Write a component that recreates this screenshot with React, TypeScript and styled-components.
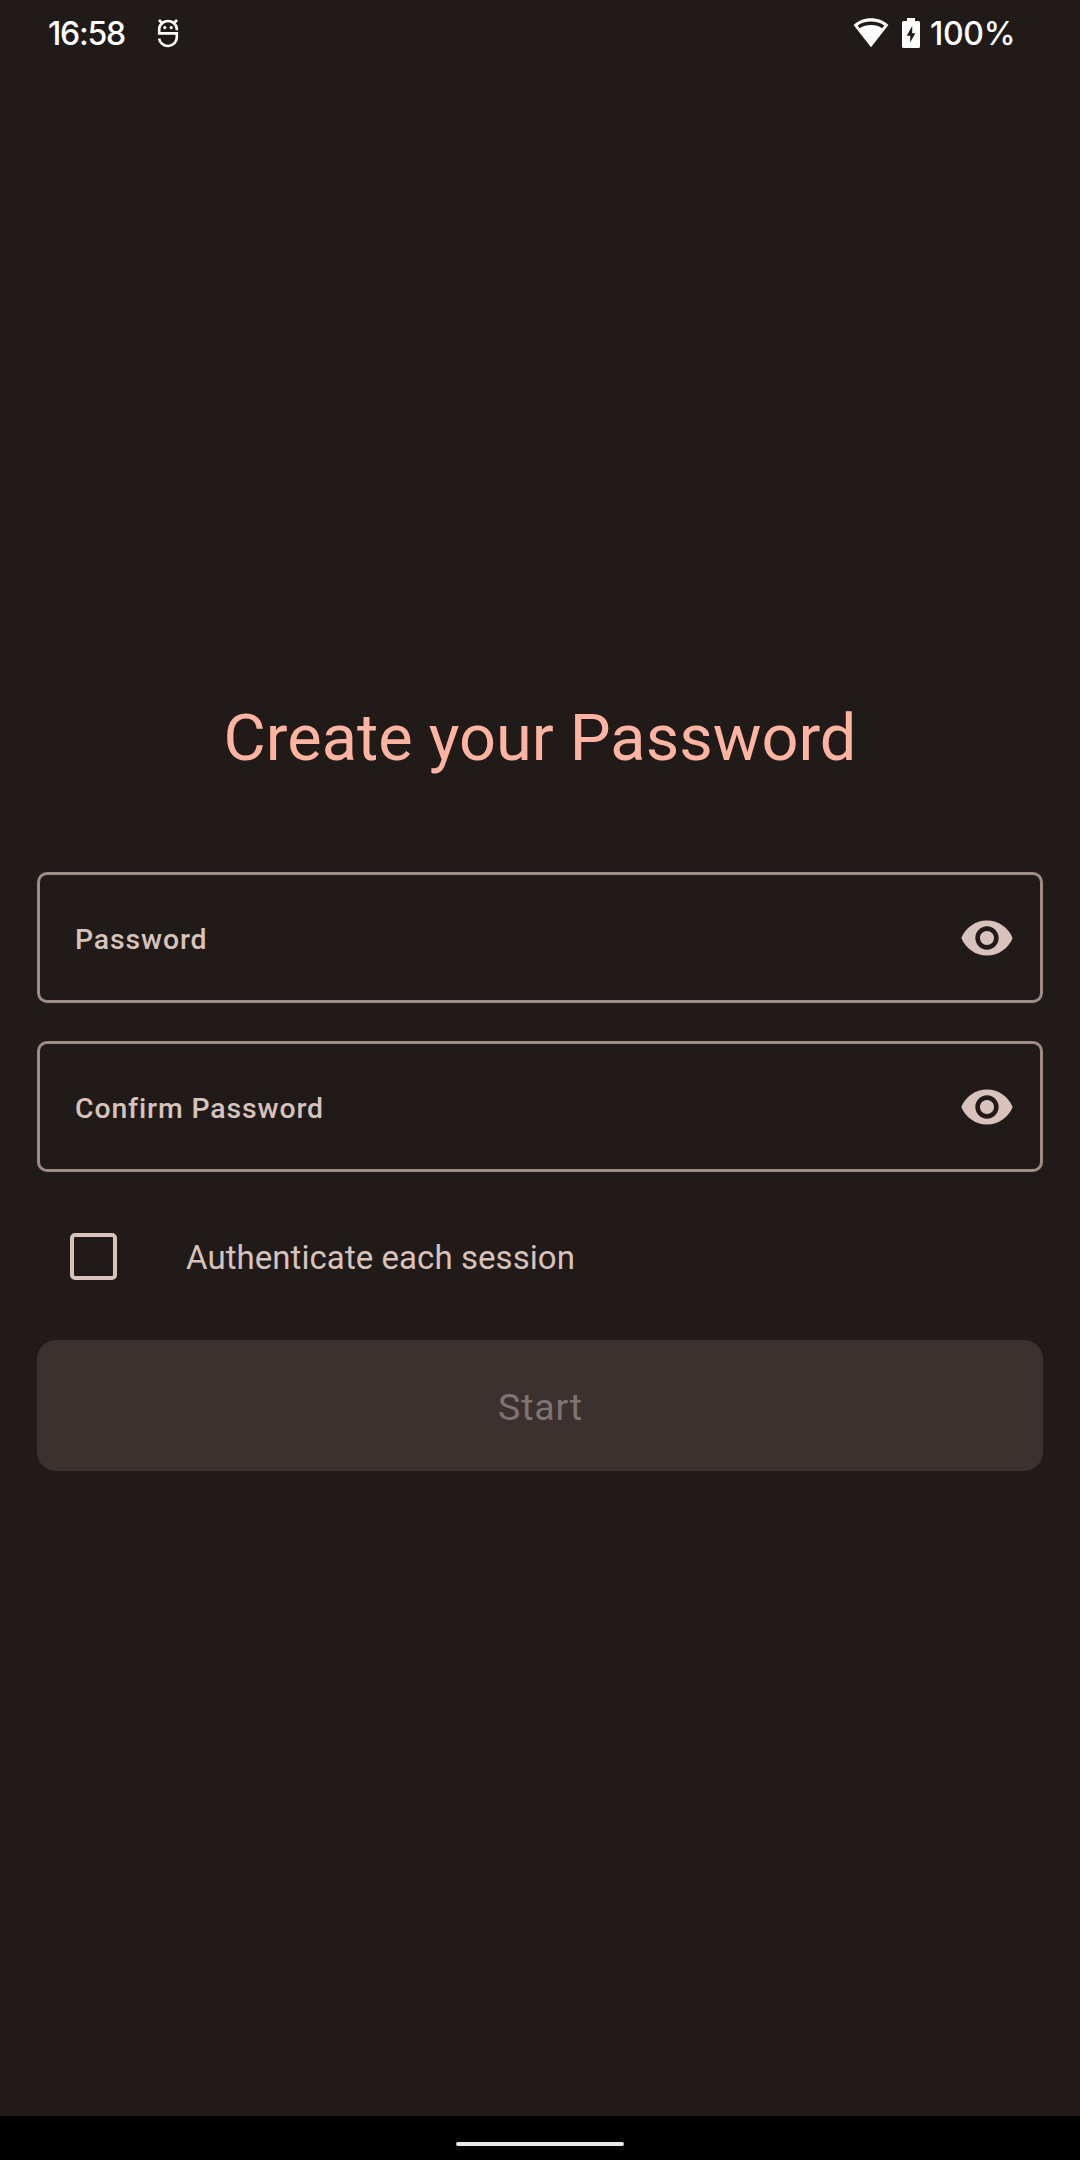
import React from "react";
import styled, { createGlobalStyle } from "styled-components";

const GlobalStyle = createGlobalStyle`
  * { box-sizing: border-box; }
  html, body { margin: 0; background: #201b18; }
`;

const Screen = styled.div`
  width: 1080px;
  height: 2160px;
  display: flex;
  flex-direction: column;
  background: #201b18;
  font-family: Roboto, "Liberation Sans", sans-serif;
  overflow: hidden;
`;

const StatusBar = styled.header`
  height: 66px;
  flex: none;
  display: flex;
  align-items: center;
  padding: 0 65px 0 48px;
  color: #fff;
  font: 550 32px/66px Inter, "Open Sans", sans-serif;
`;

const Clock = styled.span`
  width: 78px;
  padding-top: 1px;
  letter-spacing: -1.2px;
`;

const BatteryLevel = styled.span`
  width: 85px;
  padding-top: 1px;
  margin-left: 10px;
  letter-spacing: -0.3px;
`;

const Glyph = styled.svg<{ $left?: number; $push?: boolean }>`
  flex: none;
  display: block;
  margin-left: ${(p) => (p.$push ? "auto" : `${p.$left ?? 0}px`)};
`;

const Content = styled.main`
  flex: 1;
  display: flex;
  flex-direction: column;
  padding: 635px 37px 0;
`;

const Title = styled.h1`
  margin: 0 0 96px;
  font-size: 64.9px;
  line-height: 75px;
  font-weight: 400;
  text-align: center;
  color: #ffb4a2;
`;

const Form = styled.form`
  display: flex;
  flex-direction: column;
  gap: 38px;
`;

const Field = styled.label`
  height: 131px;
  display: flex;
  align-items: center;
  justify-content: space-between;
  padding: 0 25px 0 35px;
  border: 3px solid #a08c87;
  border-radius: 10px;
`;

const FieldLabel = styled.span`
  padding-top: 5px;
  font-size: 28.4px;
  line-height: 42px;
  font-weight: 500;
  letter-spacing: 0.87px;
  color: #d8c2bc;
`;

const CheckRow = styled.label`
  height: 92px;
  display: flex;
  align-items: center;
  padding-left: 33px;
  gap: 69px;
`;

const Checkbox = styled.span`
  width: 47px;
  height: 47px;
  border: 4px solid #d8c2bc;
  border-radius: 5px;
`;

const CheckLabel = styled.span`
  padding-top: 3px;
  font-size: 33px;
  line-height: 42px;
  letter-spacing: 0.06px;
  color: #d8c2bc;
`;

const StartButton = styled.button`
  height: 131px;
  border: 0;
  border-radius: 19px;
  background: #3b3230;
  color: #7f7472;
  font: 400 37.5px/44px Roboto, sans-serif;
  letter-spacing: 0.8px;
  padding: 2px 0 0 1px;
`;

const NavBar = styled.footer`
  height: 44px;
  flex: none;
  display: flex;
  justify-content: center;
  align-items: flex-start;
  padding-top: 26px;
  background: #000;
`;

const Handle = styled.span`
  width: 168px;
  height: 4px;
  border-radius: 2px;
  background: #e8e8e8;
`;

const DebugIcon = () => (
  <Glyph $left={31} width="22" height="30" viewBox="0 0 22 30" fill="none" stroke="#fff" strokeWidth="2.600">
    <path d="M19.800 12.200V10.300A8.900 8.500 0 0 0 2.200 10.300V15.400H19.800V19.600A8.900 8.600 0 0 1 2.100 20.600" />
    <path d="M2 2l2.800 2.800M20 2l-2.800 2.800" />
    <circle cx="7.800" cy="9.600" r="1.600" fill="#fff" stroke="none" />
    <circle cx="14.200" cy="9.600" r="1.600" fill="#fff" stroke="none" />
  </Glyph>
);

const WifiIcon = () => (
  <Glyph $push width="36" height="30" viewBox="0 0 36 30">
    <path d="M18 .3C11 .3 5 3 .6 7L18 29.2 35.4 7C31 3 25 .3 18 .3z" fill="#fff" />
    <path d="M4.600 7.400C8.200 4.700 12.800 3.400 18 3.400s9.800 1.300 13.400 4l-2.200 2.900C26 8.100 22.300 7 18 7S10 8.100 6.800 10.300z" fill="#201b18" />
  </Glyph>
);

const BatteryIcon = () => (
  <Glyph $left={13} width="18" height="30" viewBox="0 0 18 30">
    <path d="M5 0h8v3h3.500Q18 3 18 4.500v24Q18 30 16.500 30h-15Q0 30 0 28.500v-24Q0 3 1.500 3H5z" fill="#fff" />
    <path d="M10.200 8L4.700 17.800h3.500v6.600L13.300 15.200H10.200z" fill="#201b18" />
  </Glyph>
);

const EyeIcon = () => (
  <svg width="56" height="56" viewBox="0 0 24 24" fill="#d8c2bc">
    <path d="M12 4.500C7 4.500 2.730 7.610 1 12c1.730 4.390 6 7.500 11 7.500s9.270-3.110 11-7.500c-1.730-4.390-6-7.500-11-7.500zM12 17c-2.760 0-5-2.240-5-5s2.240-5 5-5 5 2.240 5 5-2.240 5-5 5zm0-8c-1.660 0-3 1.340-3 3s1.340 3 3 3 3-1.340 3-3-1.340-3-3-3z" />
  </svg>
);

const PasswordField = ({ label }: { label: string }) => (
  <Field>
    <FieldLabel>{label}</FieldLabel>
    <EyeIcon />
  </Field>
);

export default function App() {
  return (
    <>
      <GlobalStyle />
      <Screen>
        <StatusBar>
          <Clock>16:58</Clock>
          <DebugIcon />
          <WifiIcon />
          <BatteryIcon />
          <BatteryLevel>100%</BatteryLevel>
        </StatusBar>
        <Content>
          <Title>Create your Password</Title>
          <Form>
            <PasswordField label="Password" />
            <PasswordField label="Confirm Password" />
            <CheckRow>
              <Checkbox />
              <CheckLabel>Authenticate each session</CheckLabel>
            </CheckRow>
            <StartButton type="button">Start</StartButton>
          </Form>
        </Content>
        <NavBar>
          <Handle />
        </NavBar>
      </Screen>
    </>
  );
}
